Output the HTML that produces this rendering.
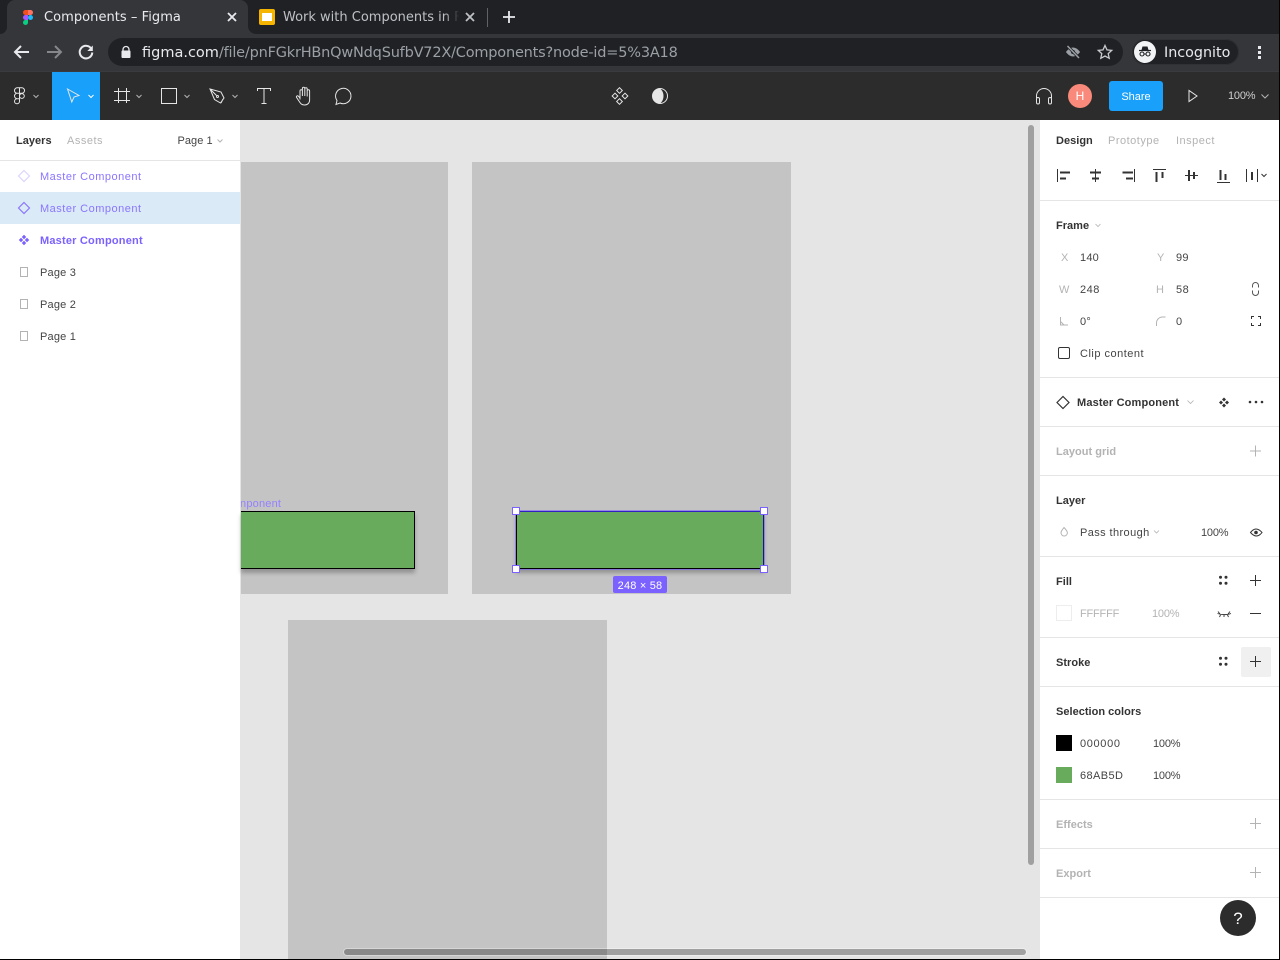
<!DOCTYPE html>
<html><head><meta charset="utf-8"><title>Components – Figma</title>
<style>
html,body{margin:0;padding:0;width:1280px;height:960px;overflow:hidden;background:#e5e5e5}
#r{position:relative;width:1280px;height:960px;overflow:hidden;font-family:"Liberation Sans",sans-serif}
.a{position:absolute}
.t{position:absolute;margin-top:1px;font-size:11px;line-height:16px;white-space:nowrap;color:#444;letter-spacing:.2px}
.b{font-weight:700;color:#333;letter-spacing:.02px}
.g{color:#b3b3b3}
.w{letter-spacing:.5px}
.n{letter-spacing:-.2px}
.c{position:absolute;margin-top:1px;font-family:"DejaVu Sans",sans-serif;white-space:nowrap}
.hr{position:absolute;left:1040px;width:239px;height:1px;background:#e5e5e5}
svg{position:absolute;overflow:visible;fill:none}
</style></head><body><div id="r">

<!-- Chrome -->
<div class="a" style="left:0;top:0;width:1280px;height:34px;background:#202124"></div>
<div class="a" style="left:0;top:34px;width:1280px;height:37px;background:#35363a"></div>
<div class="a" style="left:0;top:0;width:7px;height:34px;background:#35363a"></div>
<div class="a" style="left:0;top:0;width:7px;height:34px;background:#202124;border-radius:0 0 7px 0"></div>
<div class="a" style="left:7px;top:0;width:241px;height:34px;background:#35363a;border-radius:8px 8px 0 0"></div>
<div class="a" style="left:248px;top:26px;width:8px;height:8px;background:#35363a"></div>
<div class="a" style="left:248px;top:0;width:10px;height:34px;background:#202124;border-radius:0 0 0 8px"></div>

<svg style="left:0;top:0" width="40" height="34">
<path d="M25.500 10H28v5h-2.500a2.500 2.500 0 0 1 0-5z" fill="#f24e1e"/>
<path d="M28 10h2.500a2.500 2.500 0 0 1 0 5H28z" fill="#ff7262"/>
<path d="M25.500 15H28v5h-2.500a2.500 2.500 0 0 1 0-5z" fill="#a259ff"/>
<circle cx="30.500" cy="17.500" r="2.500" fill="#1abcfe"/>
<path d="M25.500 20H28v2.500a2.500 2.500 0 1 1-2.500-2.500z" fill="#0acf83"/>
</svg>
<div class="c" style="left:44px;top:8px;font-size:13px;line-height:18px;color:#e8eaed;letter-spacing:.05px">Components – Figma</div>
<svg style="left:227px;top:12px" width="10" height="10"><path d="M1 1l8 8M9 1l-8 8" stroke="#e8eaed" stroke-width="1.800"/></svg>

<div class="a" style="left:259px;top:9px;width:16px;height:16px;background:#f5b400;border-radius:2px"></div>
<div class="a" style="left:262px;top:13px;width:10px;height:8px;background:#fff"></div>
<div class="c" style="left:283px;top:8px;font-size:13px;line-height:18px;color:#bdc1c6;width:176px;overflow:hidden;-webkit-mask-image:linear-gradient(90deg,#000 92%,transparent 100%)">Work with Components in Figma</div>
<svg style="left:388px;top:12px" width="100" height="10"><path d="M78 1l8 8M86 1l-8 8" stroke="#bdc1c6" stroke-width="1.800"/></svg>
<div class="a" style="left:487px;top:8px;width:1px;height:19px;background:#5f6368"></div>
<svg style="left:502px;top:10px" width="14" height="14"><path d="M7 1v12M1 7h12" stroke="#e8eaed" stroke-width="1.800"/></svg>

<svg style="left:12px;top:42px" width="20" height="20"><path d="M17 10H3M9 4L3 10l6 6" stroke="#e8eaed" stroke-width="2"/></svg>
<svg style="left:44px;top:42px" width="20" height="20"><path d="M3 10h14M11 4l6 6-6 6" stroke="#85878a" stroke-width="2"/></svg>
<svg style="left:76px;top:42px" width="20" height="20"><path d="M15.500 7A6.300 6.300 0 1 0 16.300 10.500" stroke="#e8eaed" stroke-width="2"/><path d="M16.800 3.500v5.500h-5.500z" fill="#e8eaed"/></svg>

<div class="a" style="left:108px;top:38px;width:1015px;height:28px;background:#202124;border-radius:14px"></div>
<svg style="left:120px;top:45px" width="12" height="14"><path d="M3 6V4.500a3 3 0 0 1 6 0V6" stroke="#e8eaed" stroke-width="1.300"/><rect x="1.500" y="5.500" width="9" height="7.500" rx="1" fill="#e8eaed"/></svg>
<div class="c" style="left:142px;top:43px;font-size:14.500px;line-height:18px;color:#e8eaed;">figma.com<span style="color:#9aa0a6;letter-spacing:-.2px">/file/pnFGkrHBnQwNdqSufbV72X/Components?node-id=5%3A18</span></div>
<svg style="left:1065px;top:44px" width="16" height="16"><path d="M1 8s2.800-4.500 7-4.500S15 8 15 8s-2.800 4.500-7 4.500S1 8 1 8z" fill="#9aa0a6"/><circle cx="8" cy="8" r="2" fill="#202124"/><path d="M2.500 2l11.500 12" stroke="#202124" stroke-width="3"/><path d="M2.500 2l11.500 12" stroke="#9aa0a6" stroke-width="1.500"/></svg>
<svg style="left:1097px;top:44px" width="16" height="16"><path d="M8 1.500l2 4.400 4.700.5-3.500 3.200 1 4.700L8 12l-4.200 2.300 1-4.700L1.300 6.400 6 5.900z" stroke="#c8cacd" stroke-width="1.300"/></svg>
<div class="a" style="left:1132px;top:39px;width:107px;height:26px;background:#202124;border-radius:13px;box-shadow:inset 0 0 0 1px #303134"></div>
<div class="a" style="left:1134px;top:41px;width:22px;height:22px;border-radius:50%;background:#f1f3f4"></div>
<svg style="left:1136px;top:43px" width="18" height="18"><path d="M5.500 7l1-3.500h5l1 3.500z" fill="#202124"/><path d="M3 7.500h12" stroke="#202124" stroke-width="1.200"/><circle cx="6" cy="11" r="2" stroke="#202124" stroke-width="1.100"/><circle cx="12" cy="11" r="2" stroke="#202124" stroke-width="1.100"/><path d="M8 11h2" stroke="#202124"/></svg>
<div class="c" style="left:1164px;top:43px;font-size:14.300px;line-height:18px;color:#e8eaed;">Incognito</div>
<div class="a" style="left:1258px;top:46px;width:3px;height:3px;background:#e8eaed"></div>
<div class="a" style="left:1258px;top:51px;width:3px;height:3px;background:#e8eaed"></div>
<div class="a" style="left:1258px;top:56px;width:3px;height:3px;background:#e8eaed"></div>

<!-- Figma toolbar -->
<div class="a" style="left:0;top:72px;width:1280px;height:48px;background:#2c2c2c"></div>
<div class="a" style="left:0;top:71px;width:1280px;height:1px;background:#3a3b3e"></div>
<div class="a" style="left:52px;top:72px;width:48px;height:48px;background:#18a0fb"></div>
<svg style="left:0;top:72px" width="640" height="48" stroke="#e6e6e6" stroke-width="1">
<g>
<path transform="translate(0 1)" d="M14.500 17.500a2.700 2.700 0 0 1 2.700-2.700H19.500V20.300H17.200a2.700 2.700 0 0 1-2.700-2.800zM19.500 14.800h2.300a2.700 2.700 0 0 1 0 5.500H19.500zM14.500 23a2.700 2.700 0 0 1 2.700-2.700H19.500v5.400H17.200A2.700 2.700 0 0 1 14.500 23zM19.500 23a2.400 2.400 0 1 1 4.800 0 2.400 2.400 0 0 1-4.800 0zM14.500 28.300a2.700 2.700 0 0 1 2.700-2.600H19.500v2.600a2.500 2.500 0 0 1-5 0z"/>
<path d="M33.500 23l2.500 2.500 2.500-2.500" stroke="#b3b3b3"/>
<path transform="translate(0 -.5)" d="M67.500 17.500l11.500 6.500-5 1.500-2.200 5z" />
<path d="M88.500 23l2.500 2.500 2.500-2.500" stroke="#fff"/>
<path d="M114 19.500h16M114 28.500h16M118.500 16v15M126.500 16v15"/>
<path d="M136.500 23l2.500 2.500 2.500-2.500" stroke="#b3b3b3"/>
<rect x="161.500" y="16.500" width="15" height="15"/>
<path d="M184.500 23l2.500 2.500 2.500-2.500" stroke="#b3b3b3"/>
<path transform="translate(1 0)" d="M209 17l11 3 3 6-3.500 5-6-3.500zM209 17l6.500 6.500M222 27l-2 4"/><circle cx="217.500" cy="24.500" r="1"/>
<path d="M232.500 23l2.500 2.500 2.500-2.500" stroke="#b3b3b3"/>
<path d="M257.500 19v-2.500h13V19M264 16.500v15M261.500 31.500h5"/>
<path transform="translate(1 1)" d="M299 26.500v-8.500a1.200 1.200 0 0 1 2.400 0v5M301.400 23v-7.500a1.200 1.200 0 0 1 2.400 0V23M303.800 23v-7a1.200 1.200 0 0 1 2.400 0v7M306.200 23.500v-5.500a1.200 1.200 0 0 1 2.400 0v9c0 3-2 5-5 5s-4-1.500-5-3l-3-4.500c-.7-1.200.8-2.300 1.800-1.300l1.600 1.800"/>
<path transform="translate(-3 1)" d="M339 31.500l1-4a7.700 7.700 0 1 1 3 2.500z"/>
<g transform="translate(620 24)"><rect x="-2.500" y="-7.500" width="4" height="4" transform="rotate(45 -.5 -5.500)"/><rect x="-2.500" y="3.500" width="4" height="4" transform="rotate(45 -.5 5.500)"/><rect x="-7" y="-2" width="4" height="4" transform="rotate(45 -5 0)"/><rect x="3" y="-2" width="4" height="4" transform="rotate(45 5 0)"/></g>
</g></svg>
<svg style="left:652px;top:88px" width="16" height="16"><circle cx="8" cy="8" r="7.500" stroke="#e6e6e6"/><path d="M8 .5a7.500 7.500 0 0 0 0 15c2.300-1.700 3.500-4.600 3.500-7.500S10.300 2.200 8 .5z" fill="#e6e6e6"/></svg>

<svg style="left:1034px;top:86px" width="20" height="20" stroke="#e6e6e6"><path d="M2.500 12V10a7.500 7.500 0 0 1 15 0v2"/><rect x="2.500" y="11.500" width="3" height="6.500" rx="1.500"/><rect x="14.500" y="11.500" width="3" height="6.500" rx="1.500"/></svg>
<div class="a" style="left:1068px;top:84px;width:24px;height:24px;border-radius:50%;background:#f98a7b;color:#fff;font-size:12px;line-height:24px;text-align:center">H</div>
<div class="a" style="left:1109px;top:81px;width:54px;height:30px;border-radius:3px;background:#18a0fb;color:#fff;font-size:11px;line-height:32px;text-align:center">Share</div>
<svg style="left:1186px;top:89px" width="14" height="14"><path d="M3 1.500v11l8-5.500z" stroke="#e6e6e6"/></svg>
<div class="t n" style="left:1228px;top:87px;color:#d0d0d0">100%</div>
<svg style="left:1261px;top:94px" width="8" height="6"><path d="M.5 .5l3.500 3.500 3.500-3.500" stroke="#b3b3b3"/></svg>

<!-- Left panel -->
<div class="a" style="left:0;top:120px;width:240px;height:840px;background:#fff"></div>
<div class="a" style="left:240px;top:120px;width:1px;height:840px;background:#e5e5e5"></div>
<div class="a" style="left:0;top:160px;width:240px;height:1px;background:#e5e5e5"></div>
<div class="a" style="left:0;top:192px;width:240px;height:32px;background:#daebf7"></div>
<div class="t b" style="left:16px;top:132px">Layers</div>
<div class="t g w" style="left:67px;top:132px">Assets</div>
<div class="t" style="left:177.500px;top:132px;letter-spacing:.05px">Page 1</div>
<svg style="left:217px;top:139px" width="6" height="4"><path d="M.5 .5L3 3 5.500 .5" stroke="#b3b3b3"/></svg>

<svg style="left:0;top:160px" width="40" height="190">
<path d="M24 10.500l5.500 5.500-5.500 5.500-5.500-5.500z" stroke="#dcd4ff" stroke-width="1.200"/>
<path d="M24 42.500l5.500 5.500-5.500 5.500-5.500-5.500z" stroke="#8b75ff" stroke-width="1.200"/>
<g fill="#7b61ff"><path d="M24 74.800l2.200 2.200-2.200 2.200-2.200-2.200zM24 80.800l2.200 2.200-2.200 2.200-2.200-2.200zM21 77.800l2.200 2.200-2.200 2.200-2.200-2.200zM27 77.800l2.200 2.200-2.200 2.200-2.200-2.200z"/></g>
<rect x="20.500" y="107.500" width="7" height="9" stroke="#b3b3b3"/>
<rect x="20.500" y="139.500" width="7" height="9" stroke="#b3b3b3"/>
<rect x="20.500" y="171.500" width="7" height="9" stroke="#b3b3b3"/>
</svg>
<div class="t w" style="left:40px;top:168px;color:#8b75ff">Master Component</div>
<div class="t w" style="left:40px;top:200px;color:#8b75ff">Master Component</div>
<div class="t" style="left:40px;top:232px;color:#7b61ff;font-weight:700">Master Component</div>
<div class="t" style="left:40px;top:264px">Page 3</div>
<div class="t" style="left:40px;top:296px">Page 2</div>
<div class="t" style="left:40px;top:328px">Page 1</div>

<!-- Canvas -->
<div class="a" style="left:241px;top:162px;width:207px;height:432px;background:#c4c4c4"></div>
<div class="a" style="left:472px;top:162px;width:319px;height:432px;background:#c4c4c4"></div>
<div class="a" style="left:288px;top:620px;width:319px;height:340px;background:#c4c4c4"></div>
<div class="t" style="left:241px;top:495px;color:#9580ff;width:60px;overflow:hidden"><span style="margin-left:-1px">nponent</span></div>
<div class="a" style="left:241px;top:511px;width:173px;height:56px;background:#68ab5d;border:1px solid #000;border-left:0;box-shadow:0 4px 4px rgba(0,0,0,.25)"></div>
<div class="a" style="left:516px;top:511px;width:246px;height:56px;background:#68ab5d;border:1px solid #000;border-top-color:#3020c0;border-right-color:#1a1090;box-shadow:0 4px 4px rgba(0,0,0,.25)"></div>
<div class="a" style="left:515px;top:510px;width:248px;height:58px;border:1px solid rgba(123,97,255,.6)"></div>
<div class="a" style="left:512px;top:507px;width:6px;height:6px;background:#fff;border:1px solid #7b61ff"></div>
<div class="a" style="left:760px;top:507px;width:6px;height:6px;background:#fff;border:1px solid #7b61ff"></div>
<div class="a" style="left:512px;top:565px;width:6px;height:6px;background:#fff;border:1px solid #7b61ff"></div>
<div class="a" style="left:760px;top:565px;width:6px;height:6px;background:#fff;border:1px solid #7b61ff"></div>
<div class="a" style="left:613px;top:576px;width:54px;height:17px;background:#7b61ff;border-radius:2px;color:#fff;font-size:11px;line-height:20px;text-align:center;letter-spacing:.2px">248 × 58</div>

<!-- scrollbars -->
<div class="a" style="left:1028px;top:125px;width:6px;height:740px;background:rgba(0,0,0,.3);border-radius:3px"></div>
<div class="a" style="left:344px;top:949px;width:682px;height:6px;background:rgba(0,0,0,.3);border-radius:3px;box-shadow:0 0 0 1px rgba(255,255,255,.3)"></div>

<!-- Right panel -->
<div class="a" style="left:1040px;top:120px;width:240px;height:840px;background:#fff"></div>
<div class="hr" style="top:200px"></div>
<div class="hr" style="top:377px"></div>
<div class="hr" style="top:426px"></div>
<div class="hr" style="top:475px"></div>
<div class="hr" style="top:556px"></div>
<div class="hr" style="top:637px"></div>
<div class="hr" style="top:686px"></div>
<div class="hr" style="top:799px"></div>
<div class="hr" style="top:848px"></div>
<div class="hr" style="top:897px"></div>

<div class="t b" style="left:1056px;top:132px">Design</div>
<div class="t g w" style="left:1108px;top:132px">Prototype</div>
<div class="t g w" style="left:1176px;top:132px">Inspect</div>

<svg style="left:1040px;top:120px" width="240" height="840" stroke="#333">
<path d="M17.500 49v13M94.500 49v13M113 49.500h13M145 55.500h13M177 62.500h13M206.500 49v13M217.500 49v13M55.500 49v13"/>
<path d="M20 52.500h10M20 58.500h6M50 52.500h11M52 58.500h7M82.500 52.500h10.500M86 58.500h7M116.500 52v10M122.500 52v6M149 50v11M154 52v7M180.500 50v10M185.500 54v6M212 52v8" stroke-width="2"/>
<path d="M221.500 54l2.500 2.500 2.500-2.500"/>
<path d="M55.500 104l2.500 2.500 2.500-2.500" stroke="#b3b3b3" stroke-width=".8"/>
<!-- link / corners -->
<path d="M212.500 167.500v-2a3 3 0 0 1 6 0v2M212.500 170.500v2a3 3 0 0 0 6 0v-2" stroke="#555"/>
<path d="M211.500 199v-2.500h2.500M218 196.500h2.500v2.500M211.500 203v2.500h2.500M220.500 203v2.500H218" stroke="#333"/>
<path d="M20.500 197v8h7.500M20.500 201.500l3.500 3.500" stroke="#b3b3b3"/>
<path d="M116.500 206v-3a6 6 0 0 1 6-6h3" stroke="#b3b3b3"/>
<rect x="18.500" y="227.500" width="11" height="11" rx="1.500"/>
<path d="M17 282.500l6-6 6 6-6 6z" stroke-width="1.200"/>
<path d="M147.500 280.500l3 3 3-3" stroke="#b3b3b3" stroke-width=".8"/>
<g stroke="none" fill="#333"><path d="M184 277.500l2 2-2 2-2-2zM184 283.500l2 2-2 2-2-2zM181 280.500l2 2-2 2-2-2zM187 280.500l2 2-2 2-2-2z"/>
<circle cx="210" cy="282" r="1.300"/><circle cx="216" cy="282" r="1.300"/><circle cx="222" cy="282" r="1.300"/></g>
<path d="M210 331h11M215.500 325.500v11" stroke="#b3b3b3"/>
<path d="M24 407.500c-1.500 2-3 3.500-3 5.300a3.200 3.200 0 0 0 6.400 0c0-1.800-1.500-3.300-3.400-5.300z" stroke="#b3b3b3"/>
<path d="M114 410.500l2.500 2.500 2.500-2.500" stroke="#b3b3b3" stroke-width=".8"/>
<path d="M210.500 412.500s2.500-3.500 5.500-3.500 6 3.500 6 3.500-2.500 3.500-5.500 3.500-6-3.500-6-3.500z"/><circle cx="216" cy="412.500" r="1.800" fill="#333" stroke="none"/>
<g stroke="none" fill="#333"><circle cx="180.500" cy="457.300" r="1.500"/><circle cx="186" cy="457.300" r="1.500"/><circle cx="180.500" cy="463.300" r="1.500"/><circle cx="186" cy="463.300" r="1.500"/>
<circle cx="180.500" cy="538.300" r="1.500"/><circle cx="186" cy="538.300" r="1.500"/><circle cx="180.500" cy="544.300" r="1.500"/><circle cx="186" cy="544.300" r="1.500"/></g>
<path d="M210 460.500h11M215.500 455v11"/>
<rect x="16.500" y="485.500" width="15" height="15" stroke="#ededed"/>
<path d="M177.500 493.500c4 1.500 10 1.500 13.500 0M178 491.500l2 2.500M190 491.500l-2 2.500M184 495v2M180.500 495l-1 2M187.500 495l1 2" stroke-width=".9"/>
<path d="M210 493.500h11"/>
<rect x="201" y="527" width="30" height="30" rx="2" fill="#f0f0f0" stroke="none"/>
<path d="M210 541.500h11M215.500 536v11"/>
<path d="M210 703.500h11M215.500 698v11M210 752.500h11M215.500 747v11" stroke="#b3b3b3"/>
</svg>

<div class="t b" style="left:1056px;top:217px">Frame</div>
<div class="t g" style="left:1061px;top:249px">X</div><div class="t" style="left:1080px;top:249px">140</div>
<div class="t g" style="left:1157px;top:249px">Y</div><div class="t" style="left:1176px;top:249px">99</div>
<div class="t g" style="left:1059px;top:281px">W</div><div class="t w" style="left:1080px;top:281px">248</div>
<div class="t g" style="left:1156px;top:281px">H</div><div class="t w" style="left:1176px;top:281px">58</div>
<div class="t" style="left:1080px;top:313px">0°</div>
<div class="t" style="left:1176px;top:313px">0</div>
<div class="t w" style="left:1080px;top:345px">Clip content</div>
<div class="t b" style="left:1077px;top:394px;letter-spacing:.15px">Master Component</div>
<div class="t b" style="left:1056px;top:443px;color:#b3b3b3">Layout grid</div>
<div class="t b" style="left:1056px;top:492px">Layer</div>
<div class="t" style="left:1080px;top:524px;letter-spacing:.4px">Pass through</div>
<div class="t n" style="left:1201px;top:524px">100%</div>
<div class="t b" style="left:1056px;top:573px">Fill</div>
<div class="t g n" style="left:1080px;top:605px">FFFFFF</div>
<div class="t g n" style="left:1152px;top:605px">100%</div>
<div class="t b" style="left:1056px;top:654px">Stroke</div>
<div class="t b" style="left:1056px;top:703px">Selection colors</div>
<div class="a" style="left:1056px;top:735px;width:16px;height:16px;background:#000"></div>
<div class="t" style="left:1080px;top:735px;letter-spacing:.65px">000000</div>
<div class="t n" style="left:1153px;top:735px">100%</div>
<div class="a" style="left:1056px;top:767px;width:16px;height:16px;background:#68ab5d"></div>
<div class="t" style="left:1080px;top:767px;letter-spacing:.4px">68AB5D</div>
<div class="t n" style="left:1153px;top:767px">100%</div>
<div class="t b" style="left:1056px;top:816px;color:#b3b3b3">Effects</div>
<div class="t b" style="left:1056px;top:865px;color:#b3b3b3">Export</div>
<div class="a" style="left:1220px;top:900px;width:36px;height:36px;border-radius:50%;background:#2c2c2c;color:#fff;font-size:17px;line-height:37px;text-align:center">?</div>

<!-- window edges -->
<div class="a" style="left:1279px;top:0;width:1px;height:960px;background:#000"></div>
<div class="a" style="left:0;top:959px;width:1280px;height:1px;background:#000"></div>
</div></body></html>
